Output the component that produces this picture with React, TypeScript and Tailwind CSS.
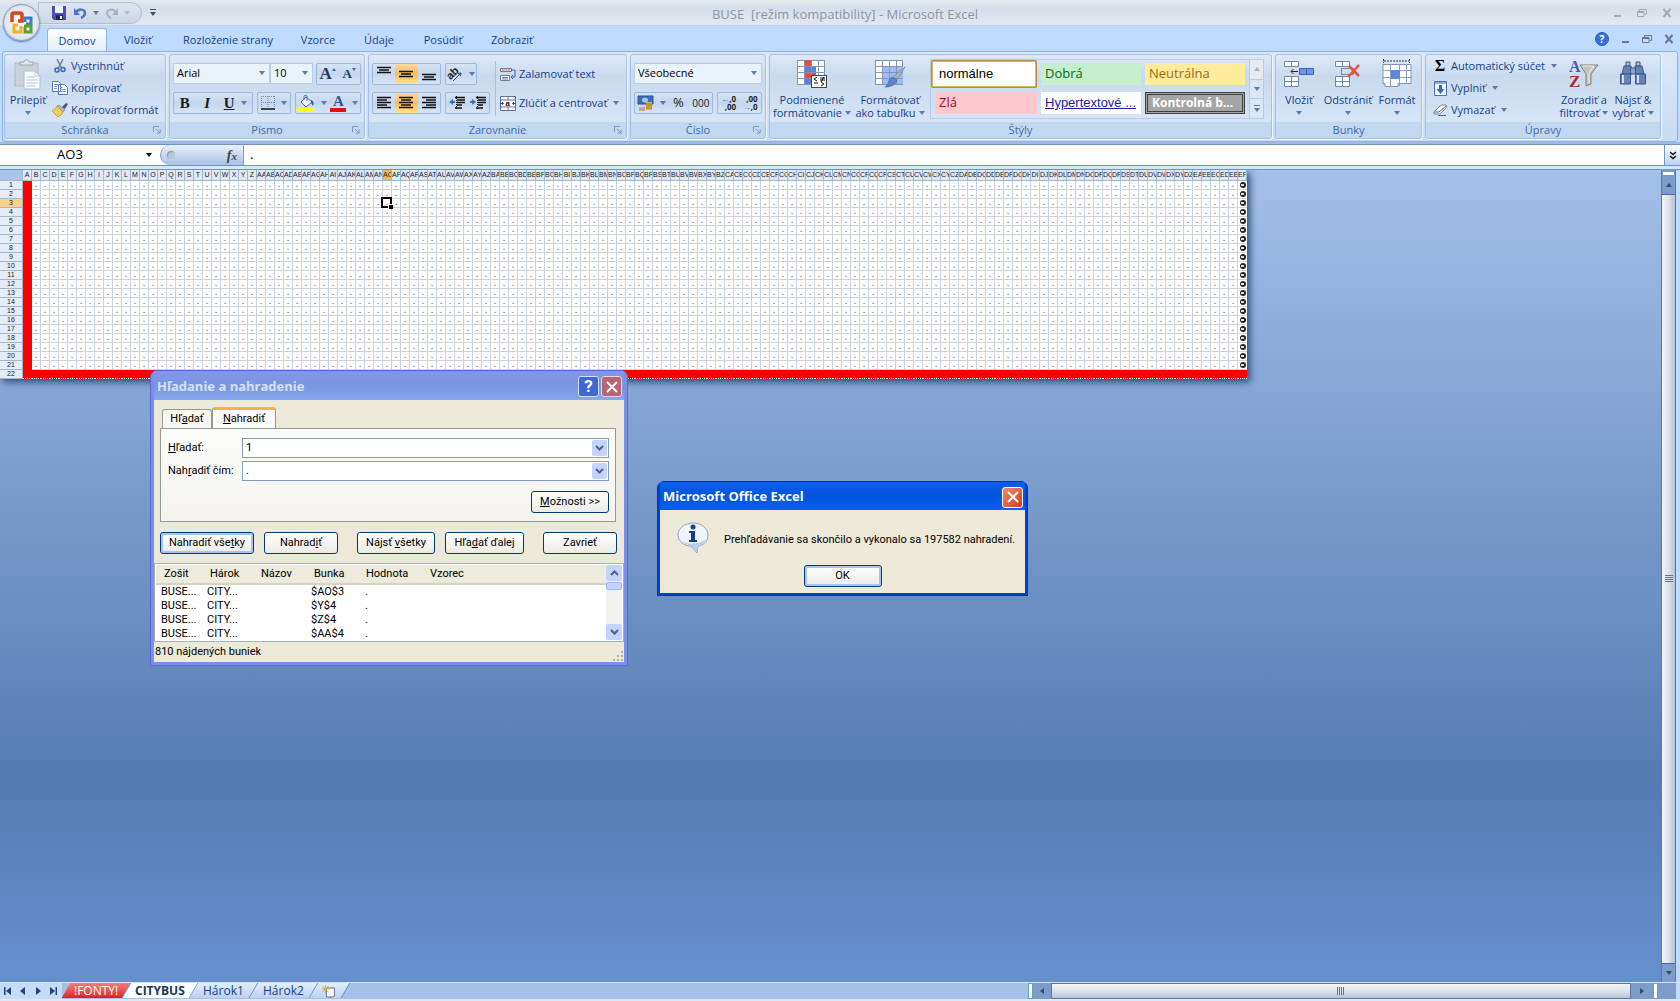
import { useState, type ReactNode } from 'react';
import clsx from 'clsx';

const RIBBON_TABS = [
  { label: 'Domov', width: 'w-[60px]' },
  { label: 'Vložiť', width: 'w-[62px]' },
  { label: 'Rozloženie strany', width: 'w-[118px]' },
  { label: 'Vzorce', width: 'w-[62px]' },
  { label: 'Údaje', width: 'w-[60px]' },
  { label: 'Posúdiť', width: 'w-[68px]' },
  { label: 'Zobraziť', width: 'w-[70px]' },
];

const ALPHABET = 'ABCDEFGHIJKLMNOPQRSTUVWXYZ';
const COLUMNS = Array.from({ length: 136 }, (_, i) =>
  i < 26 ? ALPHABET[i] : ALPHABET[Math.floor(i / 26) - 1] + ALPHABET[i % 26],
);
const ROWS = Array.from({ length: 22 }, (_, i) => i + 1);

const RESULTS = [
  { cell: '$AO$3', value: '.' },
  { cell: '$Y$4', value: '.' },
  { cell: '$Z$4', value: '.' },
  { cell: '$AA$4', value: '.' },
];

/* ---------- small shared pieces ---------- */

function Caret({ className = 'text-[#5a7cb0]' }: { className?: string }) {
  return (
    <svg viewBox="0 0 6 4" className={clsx('w-[6px] h-[4px] shrink-0', className)} aria-hidden>
      <path d="M0 0h6L3 4z" fill="currentColor" />
    </svg>
  );
}

function Launcher({ label }: { label: string }) {
  return (
    <button aria-label={label} className="absolute right-1 top-1">
      <svg viewBox="0 0 9 9" className="w-2 h-2" fill="none" stroke="#6f8fbd">
        <path d="M.5 7V.5H7M3.5 3.5l4 4M8 4v4H4" />
      </svg>
    </button>
  );
}

function Group({ title, launcher, className, children }: {
  title: string;
  launcher?: boolean;
  className?: string;
  children: ReactNode;
}) {
  return (
    <section
      aria-label={title}
      className={clsx(
        'flex flex-col shrink-0 h-[85px] rounded-[3px] border border-[#a5c0e0] shadow-[1px_1px_0_#eef5fd] bg-linear-to-b from-[#dfe9f6] via-[#c9daee] via-25% to-[#dae9f9] overflow-hidden',
        className,
      )}
    >
      <div className="flex-1 flex">{children}</div>
      <div className="relative h-4 leading-4 text-center text-[#3e6aaa] bg-[#c1d8f1]">
        {title}
        {launcher && <Launcher label={`${title} – možnosti`} />}
      </div>
    </section>
  );
}

function Cluster({ children, className }: { children: ReactNode; className?: string }) {
  return (
    <div
      className={clsx(
        'flex h-[22px] rounded-[2px] border border-[#9db8dc] bg-linear-to-b from-[#d5e3f4] via-[#c5d7ee] via-50% to-[#d5e5f7]',
        className,
      )}
    >
      {children}
    </div>
  );
}

function Tool({ label, active, className, children }: {
  label: string;
  active?: boolean;
  className?: string;
  children: ReactNode;
}) {
  return (
    <button
      aria-label={label}
      title={label}
      className={clsx(
        'h-full flex items-center justify-center gap-1.5',
        active && 'bg-linear-to-b from-[#fbd9a0] via-[#fdb95a] via-50% to-[#ffe48c]',
        className,
      )}
    >
      {children}
    </button>
  );
}

function RowButton({ icon, label, caret }: { icon: ReactNode; label: string; caret?: boolean }) {
  return (
    <button className="flex items-center gap-[3px] h-[22px] whitespace-nowrap">
      <span className="w-4 flex justify-center">{icon}</span>
      {label}
      {caret && <Caret className="ml-[3px] text-[#5a7cb0]" />}
    </button>
  );
}

function BigButton({ icon, lines, className }: { icon: ReactNode; lines: string[]; className?: string }) {
  return (
    <button className={clsx('flex flex-col items-center pt-1 whitespace-nowrap', className)}>
      <span className="h-[34px] flex items-start">{icon}</span>
      <span className="leading-[13px] h-[13px]">{lines[0]}</span>
      <span className="leading-[13px] h-[13px] flex items-center gap-[3px]">
        {lines[1]}
        <Caret />
      </span>
    </button>
  );
}

function HLines({ rows, y = 2 }: { rows: [number, number][]; y?: number }) {
  return (
    <svg viewBox="0 0 16 16" className="w-4 h-4" stroke="#111" aria-hidden>
      {rows.map(([a, b], i) => (
        <path key={i} d={`M${a} ${y + i * 2.5 + 0.5}H${b}`} strokeWidth="1.5" />
      ))}
    </svg>
  );
}

function IndentIcon({ out }: { out?: boolean }) {
  return (
    <svg viewBox="0 0 16 16" className="w-4 h-4" aria-hidden>
      <path d="M6 2.5h10M8 5h8M8 7.500h8M8 10h5M6 13h7" stroke="#111" strokeWidth="1.500" />
      <path d={out ? 'M0 7l4-3v2h2v2H4v2z' : 'M6 7L2 4v2H0v2h2v2z'} fill="#3e6cc4" />
      <path d="M7.500 1v14" stroke="#111" strokeDasharray="1 1" />
    </svg>
  );
}

function GridIcon({ children }: { children?: ReactNode }) {
  return (
    <svg viewBox="0 0 32 30" className="w-8 h-[30px]" aria-hidden>
      <rect x="1.500" y="1.500" width="27" height="24" fill="#fff" stroke="#7e93b8" />
      <path d="M8 7h21v18H8z" fill="#9dbcf4" />
      <path d="M8.500 1v25M15.500 1v25M22.500 1v25M1 7.500h28M1 13.500h28M1 19.500h28" stroke="#8396ba" />
      {children}
    </svg>
  );
}

/* ---------- ribbon ---------- */

function ClipboardGroup() {
  return (
    <Group title="Schránka" launcher className="w-[162px]">
      <BigButton
        className="w-[46px]"
        lines={['Prilepiť', '']}
        icon={
          <svg viewBox="0 0 28 32" className="w-7 h-8" aria-hidden>
            <path d="M1 4h23v23H1z" fill="#c9d0da" stroke="#b0b9c6" />
            <path d="M6 6V3h4c0-3 5-3 5 0h4v3z" fill="#e3e7ed" stroke="#9aa5b5" />
            <path d="M10 12h11l5 5v13H10z" fill="#f7f9fc" stroke="#b0bccd" />
            <path d="M21 12v5h5M12.500 18h8M12.500 21h11M12.500 24h11M12.500 27h9" stroke="#bccadd" fill="none" />
          </svg>
        }
      />
      <div className="flex flex-col pl-px">
        <RowButton
          label="Vystrihnúť"
          icon={
            <svg viewBox="0 0 12 14" className="w-3 h-3.5" fill="none" aria-hidden>
              <path d="M3 0l4.500 9M9 0L4.500 9" stroke="#6d82a3" strokeWidth="1.500" />
              <circle cx="3" cy="11" r="2" stroke="#3868b8" strokeWidth="1.500" />
              <circle cx="9" cy="10.500" r="2" stroke="#3868b8" strokeWidth="1.500" />
            </svg>
          }
        />
        <RowButton
          label="Kopírovať"
          icon={
            <svg viewBox="0 0 16 14" className="w-4 h-3.5" fill="#fff" stroke="#5577b5" aria-hidden>
              <path d="M.5.5h6l2 2v8h-8zM6.500 3.500h6l3 3v7h-9z" />
              <path d="M2 3.500h4M2 5.500h3M2 7.500h3M8 6.500h3M8 8.500h6M8 10.500h6" stroke="#7d9ad0" />
            </svg>
          }
        />
        <RowButton
          label="Kopírovať formát"
          icon={
            <svg viewBox="0 0 16 14" className="w-4 h-3.5" aria-hidden>
              <path d="M10 4l4-4 2 1-3 5z" fill="#46587c" />
              <path d="M5 3l2-1 6 5-2 2z" fill="#b7b7c0" stroke="#6b6b78" strokeWidth=".5" />
              <path d="M5 3l6 6c-1 3-3 4-5 5L0 8c2-1 4-3 5-5z" fill="#f0cf62" stroke="#b98b2b" strokeWidth=".7" />
            </svg>
          }
        />
      </div>
    </Group>
  );
}

function RibbonSelect({ label, value, className }: { label: string; value: string; className?: string }) {
  return (
    <div className={clsx('relative h-[21px]', className)}>
      <select
        aria-label={label}
        className="appearance-none w-full h-full pl-[3px] text-black bg-[#eaf2fb] border border-[#b8cde8] outline-none"
      >
        <option>{value}</option>
      </select>
      <Caret className="absolute right-[5px] top-2 text-[#5a7cb0] pointer-events-none" />
    </div>
  );
}

function FontGroup() {
  return (
    <Group title="Písmo" launcher className="w-[196px]">
      <div className="flex flex-col gap-[7px] pl-[3px] pt-2">
        <div className="flex">
          <RibbonSelect label="Písmo" value="Arial" className="w-[97px]" />
          <RibbonSelect label="Veľkosť písma" value="10" className="w-[43px] mr-[3px]" />
          <Cluster className="w-[45px] font-bold text-[#223a63]">
            <Tool label="Zväčšiť písmo" className="w-1/2">
              <span className="flex items-center font-['Liberation_Serif',serif] text-[17px]">A
                <svg viewBox="0 0 4 3" className="w-1 h-[3px] mb-2.5"><path d="M0 3h4L2 0z" fill="#3d6bb8" /></svg>
              </span>
            </Tool>
            <Tool label="Zmenšiť písmo" className="w-1/2">
              <span className="flex items-center font-['Liberation_Serif',serif] text-[13px]">A
                <svg viewBox="0 0 4 3" className="w-1 h-[3px] mb-2.5"><path d="M0 0h4L2 3z" fill="#3d6bb8" /></svg>
              </span>
            </Tool>
          </Cluster>
        </div>
        <div className="flex gap-1">
          <Cluster className="w-[80px] font-['Liberation_Serif',serif] text-[15px] text-[#1b1b1b]">
            <Tool label="Tučné" className="w-[22px]"><b>B</b></Tool>
            <Tool label="Kurzíva" className="w-[23px]"><b className="italic">I</b></Tool>
            <Tool label="Podčiarknuté" className="w-[34px]"><b className="underline">U</b><Caret /></Tool>
          </Cluster>
          <Cluster className="w-[34px]">
            <Tool label="Orámovanie" className="w-full">
              <svg viewBox="0 0 14 14" className="w-3.5 h-3.5" aria-hidden>
                <path d="M.5 0v12M7 0v12M13.500 0v12M0 .5h14M0 6.500h14" stroke="#7388ad" strokeDasharray="1 1" />
                <path d="M0 13h14" stroke="#111" strokeWidth="1.500" />
              </svg>
              <Caret />
            </Tool>
          </Cluster>
          <Cluster className="w-[66px]">
            <Tool label="Farba výplne" className="w-[34px]">
              <svg viewBox="0 0 17 17" className="w-[17px] h-[17px]" aria-hidden>
                <path d="M3 7l5-5 6 5-6 5z" fill="#eef3fa" stroke="#4e6a98" />
                <path d="M6 5V1.500c0-1.500 3-1.500 3 0V6" fill="none" stroke="#4e6a98" />
                <path d="M13 5c3 1 3 4 2 6l-2-3z" fill="#3461b4" />
                <path d="M0 13h16v4H0z" fill="#ffff1a" />
              </svg>
              <Caret />
            </Tool>
            <Tool label="Farba písma" className="w-[32px]">
              <span className="flex flex-col items-center w-4 border-b-4 border-[#dd1111] h-[17px] leading-[13px] font-['Liberation_Serif',serif] font-bold text-[15px] text-[#34578f]">A</span>
              <Caret />
            </Tool>
          </Cluster>
        </div>
      </div>
    </Group>
  );
}

function AlignGroup() {
  return (
    <Group title="Zarovnanie" launcher className="w-[259px]">
      <div className="flex flex-col gap-[7px] pl-[3px] pt-2">
        <div className="flex gap-1">
          <Cluster className="w-[69px]">
            <Tool label="Zarovnať nahor" className="w-1/3"><HLines rows={[[1, 15], [3, 13], [1, 15]]} y={1} /></Tool>
            <Tool label="Zarovnať na stred zvisle" active className="w-1/3"><HLines rows={[[1, 15], [3, 13], [1, 15]]} y={5} /></Tool>
            <Tool label="Zarovnať nadol" className="w-1/3"><HLines rows={[[1, 15], [3, 13], [1, 15]]} y={8} /></Tool>
          </Cluster>
          <Cluster className="w-[32px]">
            <Tool label="Orientácia" className="w-full">
              <svg viewBox="0 0 16 16" className="w-4 h-4" aria-hidden>
                <text x="0" y="10" transform="rotate(-45 7 8)" fontSize="11" fontWeight="bold" fontFamily="Liberation Sans" fill="#222">ab</text>
                <path d="M6 15l8-8M14 7l-3 .5M14 7l-.5 3" stroke="#444" fill="none" />
              </svg>
              <Caret />
            </Tool>
          </Cluster>
        </div>
        <div className="flex gap-1">
          <Cluster className="w-[69px]">
            <Tool label="Vľavo" className="w-1/3"><HLines rows={[[1, 15], [1, 11], [1, 15], [1, 11], [1, 15]]} /></Tool>
            <Tool label="Na stred" active className="w-1/3"><HLines rows={[[1, 15], [3, 13], [1, 15], [3, 13], [1, 15]]} /></Tool>
            <Tool label="Vpravo" className="w-1/3"><HLines rows={[[1, 15], [5, 15], [1, 15], [5, 15], [1, 15]]} /></Tool>
          </Cluster>
          <Cluster className="w-[45px]">
            <Tool label="Zmenšiť zarážku" className="w-1/2"><IndentIcon out /></Tool>
            <Tool label="Zväčšiť zarážku" className="w-1/2"><IndentIcon /></Tool>
          </Cluster>
        </div>
      </div>
      <div className="ml-[5px] mt-1.5 mb-1.5 w-px bg-[#a5c0e0]" />
      <div className="flex flex-col items-start gap-[7px] pl-1 pt-2">
        <RowButton
          label="Zalamovať text"
          icon={
            <svg viewBox="0 0 16 15" className="w-4 h-[15px]" fill="#fff" stroke="#6b7f9f" aria-hidden>
              <path d="M.5 1.500h11v3H.5zM.5 8.500h9v5h-9z" />
              <path d="M2 3h8" stroke="#c0764c" />
              <path d="M2 10.500h6M2 12h6" stroke="#6b7f9f" />
              <path d="M12 3h3v7h-4M13 8l-2 2 2 2" fill="none" stroke="#3c62a8" />
            </svg>
          }
        />
        <RowButton
          label="Zlúčiť a centrovať"
          caret
          icon={
            <svg viewBox="0 0 16 15" className="w-4 h-[15px]" aria-hidden>
              <path d="M.5.500h15v14H.5zM8 0v4M8 11v4M.5 4h15M.5 11h15" fill="#fff" stroke="#5d7299" />
              <text x="5.500" y="10" fontSize="8" fontWeight="bold" fontFamily="Liberation Sans" fill="#111">a</text>
              <path d="M0 7.500h4M12 7.500h4M2.500 6v3M13.500 6v3" stroke="#2b57ac" />
            </svg>
          }
        />
      </div>
    </Group>
  );
}

function NumberGroup() {
  return (
    <Group title="Číslo" launcher className="w-[136px]">
      <div className="flex flex-col gap-2 pl-[3px] pt-2">
        <RibbonSelect label="Formát čísla" value="Všeobecné" className="w-[128px]" />
        <div className="flex gap-1">
          <Cluster className="w-[79px] text-[#222]">
            <Tool label="Formát meny" className="w-[33px]">
              <svg viewBox="0 0 17 16" className="w-[17px] h-4" aria-hidden>
                <path d="M1 1h15v8H1z" fill="#3f6fbc" stroke="#2c4f91" />
                <ellipse cx="8" cy="5" rx="3" ry="2.500" fill="#a9c4ec" />
                <path d="M9 7h6v8H9z" fill="#e5b840" />
                <path d="M9 9h6M9 11h6M9 13h6M2 13h6M2 15h6" stroke="#a3761c" />
                <path d="M2 12h6v1H2z" fill="#e5b840" />
              </svg>
              <Caret />
            </Tool>
            <Tool label="Štýl percent" className="w-[23px] text-[13px]">%</Tool>
            <Tool label="Štýl čiarky" className="w-[23px] text-[10px]">000</Tool>
          </Cluster>
          <Cluster className="w-[45px] text-[8px] leading-[8px] font-bold text-[#222]">
            <Tool label="Pridať desatinné miesto" className="w-1/2">
              <span className="text-right"><i className="not-italic text-[#3461b4]">←</i>,0<br />,00</span>
            </Tool>
            <Tool label="Odobrať desatinné miesto" className="w-1/2">
              <span className="text-right">,00<br /><i className="not-italic text-[#3461b4]">→</i>,0</span>
            </Tool>
          </Cluster>
        </div>
      </div>
    </Group>
  );
}

function StylesGroup() {
  const cell = 'h-[22px] text-left px-1 whitespace-nowrap overflow-hidden';
  return (
    <Group title="Štýly" className="w-[503px]">
      <BigButton
        className="w-[84px]"
        lines={['Podmienené', 'formátovanie']}
        icon={
          <svg viewBox="0 0 32 30" className="w-8 h-[30px]" aria-hidden>
            <rect x="1.500" y="1.500" width="27" height="24" fill="#fff" stroke="#7e93b8" />
            <path d="M8 1h7v6H8zM8 13h12v6H8z" fill="#e04e46" />
            <path d="M8 7h12v6H8zM8 19h7v6H8z" fill="#5b80d8" />
            <path d="M8.500 1v25M15.500 1v25M22.500 1v25M1 7.500h28M1 13.500h28M1 19.500h28" stroke="#8396ba" />
            <rect x="15.500" y="16.500" width="15" height="12" fill="#fff" stroke="#444" />
            <path d="M21 18l-3 2 3 2M18 24h4M24 19h5M24 21h5M28 18l-3 5M25 23l3 2-3 2" stroke="#111" fill="none" />
          </svg>
        }
      />
      <BigButton
        className="w-[72px]"
        lines={['Formátovať', 'ako tabuľku']}
        icon={
          <GridIcon>
            <path d="M31 8l-8 12-4-2z" fill="#b5b9c4" stroke="#70757f" strokeWidth=".7" />
            <path d="M18 18l5 3c-2 6-7 7-12 7 4-2 3-8 7-10z" fill="#5d83c9" stroke="#4568a8" strokeWidth=".7" />
          </GridIcon>
        }
      />
      <div className="flex mt-1 ml-1 h-[60px] border border-[#b5cce9] font-['Open_Sans','Noto_Sans',sans-serif] text-[13px]">
        <div className="grid grid-cols-[106px_100px_100px] content-start gap-x-1 gap-y-1 pr-1">
          <button className="h-7 px-1.5 text-left text-black bg-white border-2 border-[#e9b355] outline outline-[#b88a4a] -outline-offset-1 rounded-[2px] font-['Liberation_Sans',Arial,sans-serif]">normálne</button>
          <button className={clsx(cell, 'mt-[3px] bg-[#c6efce] text-[#0d6410]')}>Dobrá</button>
          <button className={clsx(cell, 'mt-[3px] bg-[#ffeb9c] text-[#9c6a10]')}>Neutrálna</button>
          <button className={clsx(cell, 'ml-1 bg-[#ffc7ce] text-[#9c0b16]')}>Zlá</button>
          <button className={clsx(cell, 'bg-white text-[#1c1c9c] underline font-["Liberation_Sans",Arial,sans-serif]')}>Hypertextové ...</button>
          <button className={clsx(cell, 'bg-[#a5a5a5] text-white font-bold text-[12px] border-3 border-double border-[#3f3f3f] leading-4')}>Kontrolná b...</button>
        </div>
        <div className="w-3.5 flex flex-col divide-y divide-[#b5cce9] border-l border-[#b5cce9] bg-[#d9e6f6]">
          <button aria-label="Riadok vyššie" className="flex-1 flex items-center justify-center bg-[#e6e9ee]"><Caret className="rotate-180 text-[#a9b3c2]" /></button>
          <button aria-label="Riadok nižšie" className="flex-1 flex items-center justify-center"><Caret /></button>
          <button aria-label="Viac štýlov" className="flex-1 flex flex-col gap-0.5 items-center justify-center">
            <span className="w-1.5 h-px bg-[#5a7cb0]" />
            <Caret />
          </button>
        </div>
      </div>
    </Group>
  );
}

function CellsGroup() {
  return (
    <Group title="Bunky" className="w-[147px]">
      <BigButton
        className="w-[46px]"
        lines={['Vložiť', '']}
        icon={
          <svg viewBox="0 0 30 30" className="w-[30px] h-[30px]" fill="#fff" stroke="#6f86ae" aria-hidden>
            <path d="M.5 2.500h14v5H.5zM7.500 2.500v5M.5 17.500h14v10H.5zM7.500 17.500v10M.5 22.500h14" />
            <path d="M15.500 9.500h14v6h-14zM22.500 9.500v6" fill="#6d96e6" stroke="#3c62b4" />
            <path d="M14 12.500H7M9.500 10L7 12.500 9.500 15" fill="none" stroke="#222" />
          </svg>
        }
      />
      <BigButton
        className="w-[52px]"
        lines={['Odstrániť', '']}
        icon={
          <svg viewBox="0 0 26 30" className="w-[26px] h-[30px]" fill="#fff" stroke="#6f86ae" aria-hidden>
            <path d="M.5 2.500h14v5H.5zM7.500 2.500v5M.5 17.500h14v10H.5zM7.500 17.500v10M.5 22.500h14" />
            <path d="M6.500 9.500h12v6h-12z" strokeDasharray="1 1" stroke="#333" fill="none" />
            <path d="M14 7l10 10M24 6L13 18" stroke="#e2553c" strokeWidth="2.500" />
          </svg>
        }
      />
      <BigButton
        className="w-[46px]"
        lines={['Formát', '']}
        icon={
          <svg viewBox="0 0 32 30" className="w-8 h-[30px]" aria-hidden>
            <path d="M2.500 0v4M28.500 0v4M3 2h25" stroke="#333" strokeDasharray="2 1" fill="none" />
            <path d="M2 5.500h28v19H17v3H4v-3H2z" fill="#fff" stroke="#7e93b8" />
            <path d="M2 11.500h28M2 18.500h28M9.500 5v23M18.500 5v22M25.500 5v19" stroke="#8da0c3" />
            <path d="M10 11h9v9h-9z" fill="#5d86dc" />
          </svg>
        }
      />
    </Group>
  );
}

function EditGroup() {
  return (
    <Group title="Úpravy" className="w-[236px]">
      <div className="flex flex-col w-[133px] pl-1.5">
        <RowButton label="Automatický súčet" caret icon={<b className="font-['Liberation_Serif',serif] text-[16px] leading-4 text-black">Σ</b>} />
        <RowButton
          label="Vyplniť"
          caret
          icon={
            <svg viewBox="0 0 13 15" className="w-[13px] h-[15px]" aria-hidden>
              <path d="M.5.500h12v14H.5z" fill="#f3f7fd" stroke="#4a6dae" />
              <path d="M1 1h11v2H1z" fill="#8aaae0" />
              <path d="M5 4h3v4h2.500l-4 5-4-5H5z" fill="#3768c4" />
            </svg>
          }
        />
        <RowButton
          label="Vymazať"
          caret
          icon={
            <svg viewBox="0 0 15 12" className="w-[15px] h-3" aria-hidden>
              <path d="M1 8l6-6q1-1 3-1h3q2 1 0 3L8 9q-1 1-3 1H2Q0 10 1 8z" fill="#fff" stroke="#7c8596" />
              <path d="M1 8h5l7-6M5 11.500h8" stroke="#5b6476" fill="none" />
            </svg>
          }
        />
      </div>
      <BigButton
        className="w-[50px]"
        lines={['Zoradiť a', 'filtrovať']}
        icon={
          <svg viewBox="0 0 30 30" className="w-[30px] h-[30px]" aria-hidden>
            <text x="0" y="13" fontSize="16" fontWeight="bold" fontFamily="Liberation Serif" fill="#3765b4">A</text>
            <text x="0" y="28" fontSize="17" fontWeight="bold" fontFamily="Liberation Serif" fill="#a92f35">Z</text>
            <path d="M11 6h18l-7 9v10l-5 2V15z" fill="#c4c4c0" stroke="#83837d" />
            <path d="M14 7h11l-5 7v10" fill="none" stroke="#efefec" />
          </svg>
        }
      />
      <BigButton
        className="w-[48px]"
        lines={['Nájsť &', 'vybrať']}
        icon={
          <svg viewBox="0 0 28 28" className="w-7 h-7" fill="#6482b5" stroke="#3f5784" aria-hidden>
            <path d="M7 3h4v4H7zM17 3h4v4h-4z" fill="#a9bcdc" />
            <path d="M5 7h7l1 8H3zM16 7h7l2 8h-9z" />
            <path d="M11.500 9h5v6h-5z" fill="#8ba4cc" />
            <path d="M1.500 15h10v10h-10zM16.500 15h10v10h-10z" />
            <path d="M4 16v8M19 16v8" stroke="#d3dff1" strokeWidth="2" />
          </svg>
        }
      />
    </Group>
  );
}

/* ---------- window chrome ---------- */

function WindowButtons({ className }: { className?: string }) {
  return (
    <div className={clsx('flex items-center', className)}>
      <button aria-label="Minimalizovať">
        <svg viewBox="0 0 10 10" className="w-2.5 h-2.5"><path d="M2 8h7" stroke="currentColor" strokeWidth="2" /></svg>
      </button>
      <button aria-label="Obnoviť">
        <svg viewBox="0 0 10 10" className="w-2.5 h-2.5" fill="none" stroke="currentColor">
          <path d="M2.500 3V1.500h7v5H8M.5 3.500H7v5H.5zM2.500 1.500h7M.5 4.500H7" />
        </svg>
      </button>
      <button aria-label="Zavrieť">
        <svg viewBox="0 0 10 10" className="w-2.5 h-2.5"><path d="M1.500 1l7 8M8.500 1l-7 8" stroke="currentColor" strokeWidth="2" /></svg>
      </button>
    </div>
  );
}

function OfficeButton() {
  return (
    <button
      aria-label="Tlačidlo Office"
      className="absolute left-[3px] top-1 size-[37px] rounded-full border border-[#8ba0c0] bg-radial from-white via-[#e3e8ef] via-60% to-[#b4c0d2] shadow-[0_1px_2px_#5b76a0] flex items-center justify-center z-10"
    >
      <svg viewBox="0 0 24 24" className="w-6 h-6" fill="none" strokeWidth="3" aria-hidden>
        <path d="M2 11V4q0-2 2-2h6q2 0 2 2v6H8" stroke="#d6461f" strokeWidth="3.500" />
        <path d="M15 11V7h6v6h-5" stroke="#3b7ecb" />
        <path d="M8 14H4v7h7v-6" stroke="#efb21c" />
        <path d="M14 15h7v6h-6v-5" stroke="#5f9e35" />
      </svg>
    </button>
  );
}

function TitleBar() {
  return (
    <header className="h-[26px] shrink-0 flex items-center bg-linear-to-b from-[#e4e9ef] via-[#d6dee9] via-30% to-[#e3e8f0] border-b border-[#c3d4ea]">
      <div className="flex-1 flex items-center pl-[38px]">
        <div className="h-[22px] w-[104px] pl-[13px] flex items-center rounded-r-full border border-[#b3c1d6] bg-linear-to-b from-[#dde4ee] to-[#cdd7e5]">
          <button aria-label="Uložiť">
            <svg viewBox="0 0 14 14" className="w-3.5 h-3.5" aria-hidden>
              <path d="M0 0h14v14H2l-2-2z" fill="#4b4bb0" />
              <path d="M3 0h8v7H3z" fill="#edf1fb" />
              <path d="M4 9h7v5H4z" fill="#23235e" />
              <path d="M8 10h2v3H8z" fill="#fff" />
            </svg>
          </button>
          <button aria-label="Späť" className="ml-2 flex items-center gap-1.5">
            <svg viewBox="0 0 13 12" className="w-[13px] h-3" fill="none" aria-hidden>
              <path d="M2 6c2-5 9-4 9 0 0 3-2 4-4 5" stroke="#4a78c8" strokeWidth="2.500" />
              <path d="M0 1v7h6z" fill="#4a78c8" />
            </svg>
            <Caret />
          </button>
          <button aria-label="Znova" className="ml-1.5 flex items-center gap-1.5 text-[#a5b1c4]">
            <svg viewBox="0 0 13 12" className="w-[13px] h-3" fill="none" aria-hidden>
              <path d="M11 6C9 1 2 2 2 6c0 3 2 4 4 5" stroke="currentColor" strokeWidth="2" />
              <path d="M13 1v7H7z" fill="currentColor" />
            </svg>
            <Caret className="text-[#b4bfd0]" />
          </button>
        </div>
        <button aria-label="Prispôsobiť panel" className="ml-2 flex flex-col gap-0.5 items-center">
          <span className="w-1.5 h-px bg-[#33527f]" />
          <Caret className="text-[#33527f]" />
        </button>
      </div>
      <h1 className="pt-1 text-[13px] text-[#8d95a3] whitespace-pre">{'BUSE  [režim kompatibility] - Microsoft Excel'}</h1>
      <div className="flex-1 flex justify-end pl-5 pr-2">
        <WindowButtons className="gap-[15px] text-[#a3a9b3]" />
      </div>
    </header>
  );
}

function RibbonTabs() {
  const [active, setActive] = useState('Domov');
  return (
    <nav className="h-[25px] shrink-0 flex items-end bg-[#bfdbff] pl-[47px]">
      {RIBBON_TABS.map((t) => (
        <button
          key={t.label}
          onClick={() => setActive(t.label)}
          className={clsx(
            'h-[23px] pt-0.5 text-center text-[#15428b] whitespace-nowrap',
            t.width,
            active === t.label && 'rounded-t-[3px] border border-b-0 border-[#8db2e3] bg-linear-to-b from-white to-[#e3edf9]',
          )}
        >
          {t.label}
        </button>
      ))}
      <div className="ml-auto mr-1.5 h-full flex items-center gap-[11px] text-[#6b7789]">
        <button aria-label="Pomocník" className="size-3.5 rounded-full border border-[#2c5db3] bg-[#3a6fd0] text-white text-[10px] font-bold leading-3">?</button>
        <WindowButtons className="gap-3" />
      </div>
    </nav>
  );
}

function FormulaBar() {
  return (
    <div className="h-[22px] shrink-0 flex bg-white border-y border-[#6f93c8]">
      <div className="w-[160px] flex items-center pr-2">
        <input aria-label="Pole názvov" defaultValue="AO3" className="w-[140px] text-center text-[13px] text-black outline-none" />
        <button aria-label="Zoznam názvov" className="ml-auto"><Caret className="text-black" /></button>
      </div>
      <div className="w-[84px] flex items-center justify-between pl-1.5 pr-1.5 rounded-l-full border-x border-[#7d9cc9] bg-linear-to-b from-[#eaf1fa] to-[#a8c2e6]">
        <span className="size-2 rounded-full bg-[#b9c6d8] shadow-[inset_1px_1px_1px_#8294b0]" />
        <button aria-label="Vložiť funkciu" className="font-['Liberation_Serif',serif] italic font-bold text-[14px] text-[#444]">
          f<span className="text-[11px]">x</span>
        </button>
      </div>
      <input aria-label="Riadok vzorcov" defaultValue="." className="flex-1 pl-1.5 text-[13px] text-black outline-none" />
      <button aria-label="Rozbaliť riadok vzorcov" className="w-4 border-l border-[#6f93c8] bg-linear-to-b from-white to-[#bcd2f0] flex items-center justify-center">
        <svg viewBox="0 0 8 9" className="w-2 h-[9px]" fill="none" stroke="#111" strokeWidth="1.500"><path d="M1 1l3 2.500L7 1M1 5l3 2.500L7 5" /></svg>
      </button>
    </div>
  );
}

/* ---------- sheet ---------- */

function Sheet() {
  const lastCol = COLUMNS.length - 1;
  return (
    <div className="relative w-max shadow-[3px_3px_7px_#2d4a78]">
      <table className="table-fixed border-separate border-spacing-0 w-[1247px] bg-white font-['Liberation_Sans',Arial,sans-serif] text-[7px] text-[#333] leading-[8px]">
        <colgroup>
          <col className="w-[23px]" />
          {COLUMNS.map((c) => <col key={c} className="w-[9px]" />)}
        </colgroup>
        <thead>
          <tr>
            <th className="p-0 h-[11px] bg-[#a9c4e9] border-r border-b border-[#9eb6ce]" />
            {COLUMNS.map((c) => (
              <th
                key={c}
                scope="col"
                className={clsx(
                  'p-0 h-[11px] leading-[10px] font-normal border-r border-b border-[#9eb6ce] overflow-hidden whitespace-nowrap text-[#222]',
                  c === 'AO' ? 'bg-[#f8b556]' : 'bg-[#dfe8f3]',
                )}
              >
                {c}
              </th>
            ))}
          </tr>
        </thead>
        <tbody>
          {ROWS.map((r) => (
            <tr key={r}>
              <th
                scope="row"
                className={clsx(
                  'p-0 h-[9px] font-normal border-r border-b border-[#9eb6ce] text-[#222]',
                  r === 3 ? 'bg-[#fbcf8c]' : 'bg-[#e4ecf7]',
                )}
              >
                {r}
              </th>
              {COLUMNS.map((c, i) => {
                if (i === 0 || r === 22) {
                  return <td key={c} className={clsx('p-0 bg-[#fe0000]', r === 22 && 'border-b border-dotted border-white')} />;
                }
                if (i === lastCol) {
                  return (
                    <td key={c} className="p-0 border-b border-[#d0d7e5]">
                      <span className="flex items-center justify-center size-[6px] mx-auto rounded-full bg-[#222]">
                        <span className="w-[3px] h-0.5 bg-[#ddd]" />
                      </span>
                    </td>
                  );
                }
                return (
                  <td key={c} className="p-0 text-center align-top text-[11px] text-[#777] border-r border-b border-[#ccd4e0] leading-[4px]">
                    .
                  </td>
                );
              })}
            </tr>
          ))}
        </tbody>
      </table>
      {/* active cell frame */}
      <div className="absolute left-[381px] top-[27px] size-[11px] border-2 border-black">
        <span className="absolute -right-[3px] -bottom-[3px] size-[5px] bg-black border-l border-t border-white" />
      </div>
    </div>
  );
}

function VerticalScroll() {
  return (
    <div className="w-[15px] shrink-0 flex flex-col bg-[#7c9cc9] border-x border-[#5a76a3]">
      <span className="h-[5px] mt-px bg-white border border-[#6aa0b8]" />
      <button aria-label="Posunúť nahor" className="h-[18px] flex items-center justify-center"><Caret className="rotate-180 text-[#33496e]" /></button>
      <div className="flex-1 flex items-center justify-center border-y border-[#4f6a98] bg-linear-to-r from-[#f3f5f8] via-[#dde3ea] to-[#b6c3d6]">
        <svg viewBox="0 0 8 8" className="w-2 h-2" stroke="#65758f"><path d="M0 .5h8M0 2.500h8M0 4.500h8M0 6.500h8" /></svg>
      </div>
      <button aria-label="Posunúť nadol" className="h-[18px] flex items-center justify-center"><Caret className="text-[#33496e]" /></button>
    </div>
  );
}

function NavArrow({ label, d }: { label: string; d: string }) {
  return (
    <button aria-label={label} className="w-[15px] flex justify-center">
      <svg viewBox="0 0 8 8" className="w-2 h-2" fill="#1e4384"><path d={d} /></svg>
    </button>
  );
}

function SheetTab({ label, variant }: { label: ReactNode; variant?: 'active' | 'red' }) {
  return (
    <button
      className={clsx(
        'h-[15px] px-2 leading-[15px] text-[12px] border-r border-[#6f8fbf] -skew-x-[30deg]',
        variant === 'active' && 'bg-white font-bold text-[#15395f]',
        variant === 'red' && 'bg-linear-to-b from-[#f57b7b] to-[#e01818] text-white',
        !variant && 'bg-linear-to-b from-[#e3eefb] to-[#b9d1f0] text-[#15428b]',
      )}
    >
      <span className="block skew-x-[30deg]">{label}</span>
    </button>
  );
}

function BottomBar() {
  return (
    <footer className="shrink-0 h-[19px] flex bg-[#a4c1ea] border-t border-[#d5e4f7] border-b-2 border-b-[#dce9f8]">
      <div className="w-[62px] shrink-0 flex items-center bg-[#c7dbf5]">
        <NavArrow label="Prvý hárok" d="M0 0h1.500v8H0zM7 0v8L2 4z" />
        <NavArrow label="Predchádzajúci hárok" d="M6 0v8L1 4z" />
        <NavArrow label="Nasledujúci hárok" d="M2 0v8l5-4z" />
        <NavArrow label="Posledný hárok" d="M6.500 0H8v8H6.500zM1 0v8l5-4z" />
      </div>
      <div className="flex w-[966px] pl-1">
        <SheetTab variant="red" label="!FONTY!" />
        <SheetTab variant="active" label="CITYBUS" />
        <SheetTab label={<span className="px-px">Hárok1</span>} />
        <SheetTab label={<span className="px-px">Hárok2</span>} />
        <SheetTab
          label={
            <svg viewBox="0 0 15 13" className="w-[15px] h-[13px] mt-px" aria-label="Nový hárok">
              <path d="M5 3h8v8l-2 1H5z" fill="#fff" stroke="#5b7198" />
              <path d="M4 0v8M0 4h8M1 1l6 6M7 1L1 7" stroke="#e7a823" />
            </svg>
          }
        />
      </div>
      <div className="flex-1 flex items-stretch bg-[#7c9cc9]">
        <span className="w-[5px] bg-white border border-[#6aa0b8]" />
        <button aria-label="Posunúť doľava" className="w-[18px] flex items-center justify-center"><Caret className="rotate-90 text-[#33496e]" /></button>
        <div className="flex-1 flex items-center justify-center border border-[#5a76a3] bg-linear-to-b from-[#f3f5f8] via-[#dde3ea] to-[#b6c3d6]">
          <svg viewBox="0 0 8 8" className="w-2 h-2" stroke="#65758f"><path d="M.5 0v8M2.500 0v8M4.500 0v8M6.500 0v8" /></svg>
        </div>
        <button aria-label="Posunúť doprava" className="w-[22px] flex items-center justify-center"><Caret className="-rotate-90 text-[#33496e]" /></button>
        <span className="w-[5px] bg-white border border-[#6aa0b8]" />
      </div>
      <div className="w-[22px] bg-[#7c9cc9] border-r-4 border-[#bfdbff]" />
    </footer>
  );
}

/* ---------- dialogs ---------- */

function XpButton({ children, className, primary }: { children: ReactNode; className?: string; primary?: boolean }) {
  return (
    <button
      className={clsx(
        'h-[22px] rounded-[3px] border border-[#003c74] bg-linear-to-b from-white to-[#ecebe5] text-black whitespace-nowrap',
        primary && 'shadow-[inset_0_0_0_2px_#a9c3f0]',
        className,
      )}
    >
      {children}
    </button>
  );
}

function XpChevron({ up }: { up?: boolean }) {
  return (
    <svg viewBox="0 0 9 6" className={clsx('w-[9px] h-1.5', up && 'rotate-180')} fill="none" aria-hidden>
      <path d="M1 1l3.500 3.500L8 1" stroke="#4d6185" strokeWidth="2" />
    </svg>
  );
}

function ComboField({ id, label, value }: { id: string; label: ReactNode; value: string }) {
  return (
    <div className="flex items-center h-5">
      <label htmlFor={id} className="w-[74px] whitespace-nowrap">{label}</label>
      <div className="flex-1 h-5 flex border border-[#7f9db9] bg-white p-px">
        <input id={id} defaultValue={value} className="flex-1 min-w-0 pl-0.5 outline-none" />
        <button aria-label="Rozbaliť" className="w-[15px] rounded-[2px] bg-[#c3d3fb] flex items-center justify-center"><XpChevron /></button>
      </div>
    </div>
  );
}

function CloseX() {
  return (
    <svg viewBox="0 0 12 12" className="w-3 h-3" aria-hidden><path d="M1 1l10 10M11 1L1 11" stroke="#fff" strokeWidth="2" /></svg>
  );
}

function FindDialog() {
  const [tab, setTab] = useState<'find' | 'replace'>('replace');
  return (
    <div role="dialog" aria-label="Hľadanie a nahradenie" className="absolute left-[150px] top-[370px] w-[478px] h-[296px] flex flex-col rounded-t-[7px] bg-[#7b8fe6] border border-[#5468d8] px-[3px] pb-[3px] font-['Roboto','Liberation_Sans',sans-serif] text-[11px] text-black">
      <div className="h-[29px] shrink-0 flex items-center gap-0.5 pl-[3px] pr-0.5 pt-0.5 bg-linear-to-b from-[#7f97e8] via-[#7a95e2] to-[#85a7ec]">
        <h2 className="flex-1 font-['Open_Sans',sans-serif] font-bold text-[13px] text-[#d5e2fa]">Hľadanie a nahradenie</h2>
        <button aria-label="Pomocník" className="size-[21px] rounded-[3px] border border-[#d5dff8] bg-[#4067d6] text-white text-[17px] font-bold leading-[19px]">?</button>
        <button aria-label="Zavrieť" className="size-[21px] rounded-[3px] border border-[#e3d5e0] bg-[#b96472] flex items-center justify-center"><CloseX /></button>
      </div>
      <div className="flex-1 flex flex-col bg-[#ece9d8]">
        <div className="flex items-end h-[28px] pl-2">
          <button
            onClick={() => setTab('find')}
            className={clsx('h-[19px] w-[50px] rounded-t-[3px] border border-b-0 border-[#919b9c] bg-[#f7f6f1]', tab === 'find' && 'border-t-2 border-t-[#e5972d]')}
          >
            Hľ<u>a</u>dať
          </button>
          <button
            onClick={() => setTab('replace')}
            className={clsx('h-[21px] w-[64px] rounded-t-[3px] border border-b-0 border-[#919b9c] bg-[#fcfcfa]', tab === 'replace' && 'border-t-3 border-t-[#f5b23c]')}
          >
            <u>N</u>ahradiť
          </button>
        </div>
        <div className="ml-1.5 mr-2 flex flex-col gap-[3px] border border-[#919b9c] bg-linear-to-b from-[#fcfcfb] to-[#f4f3ee] pl-[7px] pr-1.5 pt-[9px] pb-2">
          <ComboField id="find-what" label={<><u>H</u>ľadať:</>} value="1" />
          <ComboField id="replace-with" label={<>Nah<u>r</u>adiť čím:</>} value="." />
          <XpButton className="mt-[7px] w-[78px] self-end"><u>M</u>ožnosti &gt;&gt;</XpButton>
        </div>
        <div className="mt-[10px] ml-1.5 mr-[7px] flex">
          <XpButton primary className="w-[94px]">Nahradiť vše<u>t</u>ky</XpButton>
          <XpButton className="w-[74px] ml-[10px]">Nahrad<u>i</u>ť</XpButton>
          <XpButton className="w-[78px] ml-auto mr-[10px]">Nájsť <u>v</u>šetky</XpButton>
          <XpButton className="w-[79px] mr-[19px]">Hľa<u>d</u>ať ďalej</XpButton>
          <XpButton className="w-[74px]">Zavrieť</XpButton>
        </div>
        <div className="mt-[9px] h-[79px] flex bg-white border border-[#9fb0c0] p-px overflow-hidden">
          <div className="flex-1">
            <table className="w-full table-fixed border-separate border-spacing-0 text-left">
              <thead>
                <tr className="bg-[#ebeadb]">
                  {[
                    ['Zošit', 'w-[46px]'],
                    ['Hárok', 'w-[51px]'],
                    ['Názov', 'w-[53px]'],
                    ['Bunka', 'w-[52px]'],
                    ['Hodnota', 'w-[64px]'],
                    ['Vzorec', ''],
                  ].map(([h, w]) => (
                    <th key={h} scope="col" className={clsx('h-5 p-0 pl-2 font-normal border-b-2 border-[#d6d2c2]', w)}>{h}</th>
                  ))}
                </tr>
              </thead>
              <tbody>
                {RESULTS.map((r) => (
                  <tr key={r.cell} className="leading-[14px]">
                    <td className="p-0 pl-[5px]">BUSE...</td>
                    <td className="p-0 pl-[5px]">CITY...</td>
                    <td className="p-0" />
                    <td className="p-0 pl-[5px]">{r.cell}</td>
                    <td className="p-0 pl-[7px]">{r.value}</td>
                    <td className="p-0" />
                  </tr>
                ))}
              </tbody>
            </table>
          </div>
          <div className="w-4 flex flex-col bg-[#f3f3ee]">
            <button aria-label="Nahor" className="h-4 rounded-[2px] bg-[#c3d3fb] flex items-center justify-center"><XpChevron up /></button>
            <span className="mt-px h-2 rounded-[2px] bg-[#c3d3fb] border border-[#9db4e8]" />
            <button aria-label="Nadol" className="mt-auto h-4 rounded-[2px] bg-[#c3d3fb] flex items-center justify-center"><XpChevron /></button>
          </div>
        </div>
        <div className="flex-1 flex items-center justify-between pl-px">
          <span>810 nájdených buniek</span>
          <svg viewBox="0 0 12 12" className="w-3 h-3 self-end" fill="#b5b29f" aria-hidden>
            <path d="M9 1h2v2H9zM9 5h2v2H9zM5 5h2v2H5zM9 9h2v2H9zM5 9h2v2H5zM1 9h2v2H1z" />
          </svg>
        </div>
      </div>
    </div>
  );
}

function MessageDialog() {
  return (
    <div role="alertdialog" aria-label="Microsoft Office Excel" className="absolute left-[657px] top-[481px] w-[371px] h-[115px] flex flex-col rounded-t-[7px] bg-[#0a3fd0] border border-[#0a32b0] px-0.5 pb-0.5 font-['Roboto','Liberation_Sans',sans-serif] text-[11px] text-black">
      <div className="h-[28px] shrink-0 flex items-center pl-[3px] pr-0.5 pt-0.5 bg-linear-to-b from-[#0a5fe8] via-[#0453dc] to-[#0460f5]">
        <h2 className="flex-1 font-['Open_Sans',sans-serif] font-bold text-[13px] text-white">Microsoft Office Excel</h2>
        <button aria-label="Zavrieť" className="size-[21px] rounded-[3px] border border-white bg-linear-to-br from-[#ec8a6c] to-[#cf3a12] flex items-center justify-center"><CloseX /></button>
      </div>
      <div className="flex-1 flex flex-col items-center bg-[#ece9d8]">
        <div className="w-full flex items-center pt-[11px] pl-[17px] gap-[15px]">
          <svg viewBox="0 0 32 34" className="w-8 h-[34px]" aria-hidden>
            <path d="M16 2c8 0 15 5 15 12 0 6-4 10-10 11l-1 7-6-7C7 25 1 20 1 14 1 7 8 2 16 2z" fill="#eef4fc" stroke="#8fa5c6" />
            <path d="M4 19c6 5 17 5 25-1-2 4-5 6-8 7l-1 6-5-6c-5-1-8-3-11-6z" fill="#b9cde8" />
            <circle cx="16" cy="6" r="2.500" fill="#153e8f" />
            <path d="M12 10h6v9h2v2h-8v-2h2v-7h-2z" fill="#153e8f" />
          </svg>
          <p className="whitespace-nowrap pt-1">Prehľadávanie sa skončilo a vykonalo sa 197582 nahradení.</p>
        </div>
        <XpButton primary className="mt-[10px] w-[78px]">OK</XpButton>
      </div>
    </div>
  );
}

export default function App() {
  return (
    <div className="relative h-screen flex flex-col overflow-hidden bg-[#bfdbff] font-['Open_Sans','Noto_Sans',sans-serif] text-[11px] text-[#15428b]">
      <OfficeButton />
      <TitleBar />
      <RibbonTabs />
      <div className="shrink-0 h-[91px] mx-0.5 flex gap-[3px] pt-[2px] pl-px rounded-[3px] border border-[#8db2e3] bg-linear-to-b from-[#dbe8f8] to-[#c8dcf4]">
        <ClipboardGroup />
        <FontGroup />
        <AlignGroup />
        <NumberGroup />
        <StylesGroup />
        <CellsGroup />
        <EditGroup />
      </div>
      <div className="h-0.5 shrink-0 bg-[#9ebbe3]" />
      <FormulaBar />
      <div className="h-[3px] shrink-0 bg-[#d6e5f7]" />
      <main className="flex-1 min-h-0 flex border-t border-[#6f93c8]">
        <div className="flex-1 min-w-0 overflow-hidden bg-linear-to-b from-[#a3c0e9] via-[#557cb1] via-75% to-[#6690cd]">
          <Sheet />
        </div>
        <VerticalScroll />
        <div className="w-1 bg-[#bfdbff]" />
      </main>
      <BottomBar />
      <FindDialog />
      <MessageDialog />
    </div>
  );
}
